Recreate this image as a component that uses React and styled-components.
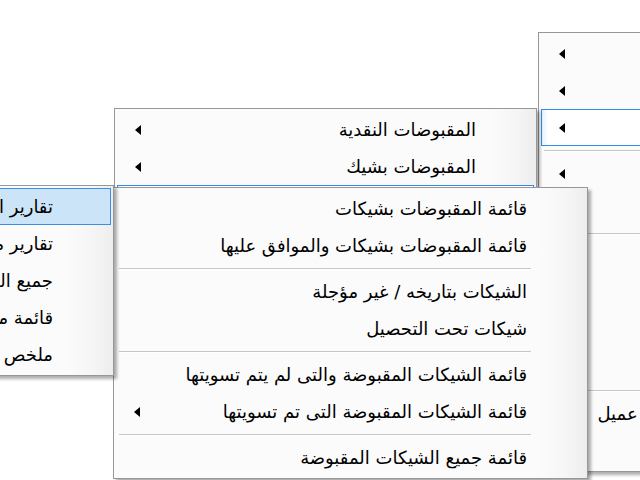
import React from 'react'
import styled, { createGlobalStyle, css } from 'styled-components'

const GlobalStyle = createGlobalStyle`
  html, body {
    margin: 0;
    background: #ffffff;
    font-family: "DejaVu Sans", sans-serif;
  }
`

const Desktop = styled.div`
  position: relative;
  width: 640px;
  height: 480px;
  overflow: hidden;
  background: #ffffff;
`

// popup menus float over each other, so they are placed on the canvas
const Menu = styled.div`
  position: absolute;
  left: ${p => p.$x}px;
  top: ${p => p.$y}px;
  width: ${p => p.$w}px;
  z-index: ${p => p.$z};
  box-sizing: border-box;
  direction: rtl;
  display: flex;
  flex-direction: column;
  padding: 2px;
  border: 1px solid #979797;
  background: linear-gradient(to left, #ededed 0px, #f6f6f6 22px, #fbfbfb 48px, #fbfbfb 100%);
  box-shadow: 3px 3px 3px rgba(0, 0, 0, 0.32);
`

const Item = styled.div`
  display: flex;
  align-items: center;
  justify-content: space-between;
  height: 37px;
  box-sizing: border-box;
  border: 1px solid transparent;
  padding: 0 57px 0 17px;
  font-size: 18px;
  color: #000;
  white-space: nowrap;
  ${p => p.$state === 'focus' && css`
    border-color: #2f8de4;
    background: linear-gradient(to right, #e4f0fb 0px, #ffffff 6px);
  `}
  ${p => p.$state === 'hot' && css`
    border-color: #3a8ee4;
    background: #cce4f8;
  `}
`

const Label = styled.span`
  display: block;
`

const Arrow = styled.span`
  width: 0;
  height: 0;
  border-top: 5px solid transparent;
  border-bottom: 5px solid transparent;
  border-right: 6px solid #000;
`

const Separator = styled.div`
  display: flex;
  align-items: center;
  height: 9px;
  margin: 0 54px 0 3px;
  &::before {
    content: '';
    flex: 1;
    height: 1px;
    background: #c6c6c6;
    box-shadow: 0 1px 0 #ffffff;
  }
`

const SEP = { sep: true }

const menus = [
  {
    x: 538, y: 32, w: 265, z: 1,
    items: [
      { t: '', arrow: true },
      { t: '', arrow: true },
      { t: '', arrow: true, state: 'focus' },
      SEP,
      { t: '', arrow: true },
      { t: '' },
      SEP,
      { t: '' },
      { t: '' },
      { t: '' },
      { t: '' },
      SEP,
      { t: 'كشف حساب عميل' },
      { t: '' },
    ],
  },
  {
    x: 114, y: 108, w: 423, z: 2,
    items: [
      { t: 'المقبوضات النقدية', arrow: true },
      { t: 'المقبوضات بشيك', arrow: true },
      { t: '', arrow: true, state: 'focus' },
    ],
  },
  {
    x: 113, y: 187, w: 475, z: 3,
    items: [
      { t: 'قائمة المقبوضات بشيكات' },
      { t: 'قائمة المقبوضات بشيكات والموافق عليها' },
      SEP,
      { t: 'الشيكات بتاريخه / غير مؤجلة' },
      { t: 'شيكات تحت التحصيل' },
      SEP,
      { t: 'قائمة الشيكات المقبوضة والتى لم يتم تسويتها' },
      { t: 'قائمة الشيكات المقبوضة التى تم تسويتها', arrow: true },
      SEP,
      { t: 'قائمة جميع الشيكات المقبوضة' },
    ],
  },
  {
    x: -136, y: 185, w: 250, z: 4,
    items: [
      { t: 'تقارير الشيكات', state: 'hot' },
      { t: 'تقارير مفصلة' },
      { t: 'جميع الشيكات' },
      { t: 'قائمة مختصرة' },
      { t: 'ملخص الشيكات' },
    ],
  },
]

export default function App() {
  return (
    <>
      <GlobalStyle />
      <Desktop>
        {menus.map((m, i) => (
          <Menu key={i} $x={m.x} $y={m.y} $w={m.w} $z={m.z}>
            {m.items.map((it, j) =>
              it.sep ? (
                <Separator key={j} />
              ) : (
                <Item key={j} $state={it.state}>
                  <Label>{it.t}</Label>
                  {it.arrow && <Arrow />}
                </Item>
              )
            )}
          </Menu>
        ))}
      </Desktop>
    </>
  )
}
